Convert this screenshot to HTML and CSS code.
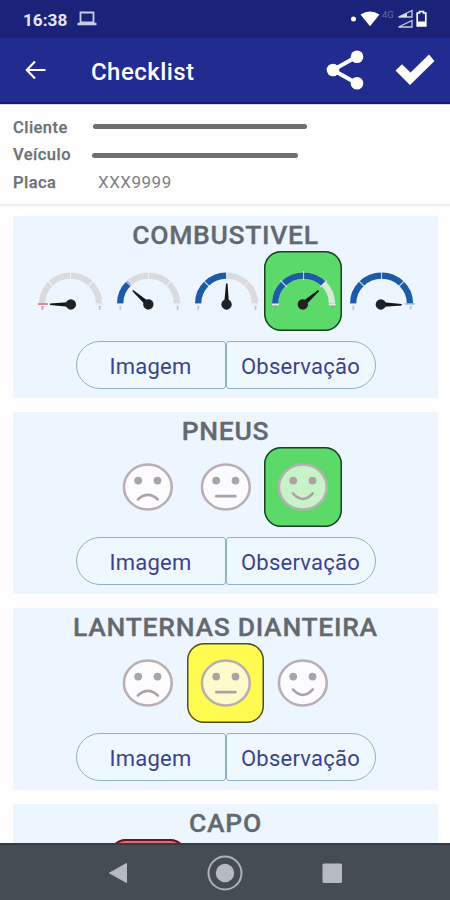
FILE: index.html
```
<!DOCTYPE html>
<html lang="pt-BR">
<head>
<meta charset="utf-8">
<title>Checklist</title>
<link rel="stylesheet" href="styles.css">
</head>
<body>
<svg class="defs" aria-hidden="true">
  <symbol id="dial" viewBox="0 0 78 80">
    <path d="M11.200 52.500A28.500 28 0 0 1 68.200 52.500" fill="none" stroke="var(--track, #dadbde)" stroke-width="6.300"/>
    <path d="M11.200 52.500A28.500 28 0 0 1 68.200 52.500" fill="none" stroke="#1b5ba8" stroke-width="6.300" pathLength="100" stroke-dasharray="var(--level, 0) 200"/>
    <path d="M39.700 20V29M16.500 29.500L23 36M63 29.500L56.500 36" stroke="#eef5fd" stroke-opacity=".75" stroke-width="1.200"/>
    <path d="M8 53.500H15M65 53.500H72" stroke="#e9edf2" stroke-width="1.500"/>
    <path d="M10.500 56H12.500M10.500 58H12M68 56H70M68 58H69.500" stroke="#8f99a6" stroke-width="1"/>
  </symbol>
  <symbol id="needle" viewBox="0 0 78 80">
    <path d="M18 52L39 50.500V55.500L18 53.500Z" fill="#15171b"/>
    <circle cx="39" cy="53" r="5.200" fill="#202226"/>
  </symbol>
  <symbol id="face" viewBox="0 0 78 80">
    <ellipse cx="39" cy="40" rx="24" ry="22.600" fill="var(--skin, #fcfcfe)" stroke="#b9afb3" stroke-width="2.600"/>
    <circle cx="29.300" cy="33.500" r="3.900" fill="#aba3a5"/>
    <circle cx="48.700" cy="33.500" r="3.900" fill="#aba3a5"/>
  </symbol>
  <symbol id="sad" viewBox="0 0 78 80">
    <use href="#face"/>
    <path d="M29 52.500Q39 43.500 49 52.500" fill="none" stroke="#aba3a5" stroke-width="2.600" stroke-linecap="round"/>
  </symbol>
  <symbol id="neutral" viewBox="0 0 78 80">
    <use href="#face"/>
    <path d="M29.500 49.200H48.500" stroke="#aba3a5" stroke-width="2.700" stroke-linecap="round"/>
  </symbol>
  <symbol id="happy" viewBox="0 0 78 80">
    <use href="#face"/>
    <path d="M29 46.500Q39 57.500 49 46.500" fill="none" stroke="#aba3a5" stroke-width="2.600" stroke-linecap="round"/>
  </symbol>
</svg>

<div class="screen">
  <div class="status">
    <span class="clock">16:38</span>
    <svg class="laptop" width="20" height="16" viewBox="0 0 20 16"><path d="M3.500 1.500H16.500V11.500H3.500Z" fill="none" stroke="#c9cce6" stroke-width="1.800"/><path d="M.5 11.800H19.500V14.300H.5Z" fill="#c9cce6"/></svg>
    <div class="signals">
      <svg width="30" height="18" viewBox="0 0 30 18"><circle cx="3.500" cy="9" r="2.500" fill="#fff"/><path d="M10.500 4.500Q20 -1.500 29.500 4.500L20 16.200Z" fill="#fff"/></svg>
      <span class="network">4G</span>
      <svg width="32" height="20" viewBox="0 0 32 20"><path d="M1.500 8L15 1.500V8ZM1.500 18L15 11.500V18Z" fill="none" stroke="#c9cce2" stroke-width="1.300"/><path d="M2 8L10 4V8Z" fill="#dfe1ef"/><path d="M20.200 4H22.500V2.500H26.500V4H28.800V17H20.200Z" fill="none" stroke="#fff" stroke-width="1.700"/><path d="M20 12.500H29V17H20Z" fill="#fff"/></svg>
    </div>
  </div>

  <header class="toolbar">
    <svg class="back" width="22" height="20" viewBox="0 0 22 20"><path d="M20.500 10H2M10 1.500L1.800 10L10 18.500" fill="none" stroke="#fff" stroke-width="2.200"/></svg>
    <h1>Checklist</h1>
    <svg class="share" width="38" height="40" viewBox="0 0 38 40"><path d="M31 6.500L7 20L31 33.500" fill="none" stroke="#fff" stroke-width="4"/><circle cx="31" cy="6.700" r="6.300" fill="#fff"/><circle cx="7" cy="20" r="6.300" fill="#fff"/><circle cx="31" cy="33.300" r="6.300" fill="#fff"/></svg>
    <svg class="confirm" width="40" height="32" viewBox="0 0 40 32"><path d="M.5 16.500L7 10.300L15.500 18.500L34 .5L39.500 7L15 31Z" fill="#fff"/></svg>
  </header>

  <section class="details">
    <div class="row"><b>Cliente</b><i class="line client"></i></div>
    <div class="row"><b>Veículo</b><i class="line vehicle"></i></div>
    <div class="row"><b>Placa</b><span class="plate">XXX9999</span></div>
  </section>

  <main class="list">
    <section class="card">
      <h2>COMBUSTIVEL</h2>
      <div class="options">
        <svg class="option" viewBox="0 0 78 80"><use href="#dial"/><path d="M7 53H17" stroke="#e1667e" stroke-width="1.500"/><path d="M10.500 56H13M10.500 58H12.500" stroke="#e1899b"/><use href="#needle" x="1" y=".5"/></svg>
        <svg class="option quarter" viewBox="0 0 78 80"><use href="#dial"/><use href="#needle" transform="translate(.5 .5) rotate(41 39 53)"/></svg>
        <svg class="option half" viewBox="0 0 78 80"><use href="#dial"/><use href="#needle" transform="translate(.7 .5) rotate(90 39 53)"/></svg>
        <svg class="option three-quarters good" viewBox="0 0 78 80"><use href="#dial"/><use href="#needle" transform="translate(0 .5) rotate(138 39 53)"/></svg>
        <svg class="option full" viewBox="0 0 78 80"><use href="#dial"/><path d="M63 53H73" stroke="#72b6df" stroke-width="1.300"/><use href="#needle" transform="translate(0 .5) rotate(180 39 53)"/></svg>
      </div>
      <div class="actions"><button>Imagem</button><button>Observação</button></div>
    </section>

    <section class="card">
      <h2>PNEUS</h2>
      <div class="options">
        <svg class="option" viewBox="0 0 78 80"><use href="#sad"/></svg>
        <svg class="option" viewBox="0 0 78 80"><use href="#neutral"/></svg>
        <svg class="option good" viewBox="0 0 78 80"><use href="#happy"/></svg>
      </div>
      <div class="actions"><button>Imagem</button><button>Observação</button></div>
    </section>

    <section class="card">
      <h2>LANTERNAS DIANTEIRA</h2>
      <div class="options">
        <svg class="option" viewBox="0 0 78 80"><use href="#sad"/></svg>
        <svg class="option fair" viewBox="0 0 78 80"><use href="#neutral"/></svg>
        <svg class="option" viewBox="0 0 78 80"><use href="#happy"/></svg>
      </div>
      <div class="actions"><button>Imagem</button><button>Observação</button></div>
    </section>

    <section class="card">
      <h2>CAPO</h2>
      <div class="options">
        <svg class="option bad" viewBox="0 0 78 80"><use href="#sad"/></svg>
        <svg class="option" viewBox="0 0 78 80"><use href="#neutral"/></svg>
        <svg class="option" viewBox="0 0 78 80"><use href="#happy"/></svg>
      </div>
    </section>
  </main>

  <nav class="navbar">
    <svg width="36" height="36" viewBox="0 0 36 36"><path d="M9.500 18L26.500 8.500V27.500Z" fill="#b5bbc1" stroke="#b5bbc1" stroke-linejoin="round"/></svg>
    <svg width="36" height="36" viewBox="0 0 36 36"><circle cx="18" cy="18" r="16.500" fill="none" stroke="#adb3ba" stroke-width="2"/><circle cx="18" cy="18" r="9.200" fill="#b5bbc1"/></svg>
    <svg width="36" height="36" viewBox="0 0 36 36"><rect x="8.500" y="8.500" width="19.500" height="19.500" rx="1.500" fill="#b5bbc1"/></svg>
  </nav>
</div>
</body>
</html>
```
FILE: styles.css
```
* { box-sizing: border-box; }
body { margin: 0; font-family: Roboto, sans-serif; background: #fefefe; }
.defs { display: block; width: 0; height: 0; }
.screen { width: 450px; height: 900px; display: flex; flex-direction: column; overflow: hidden; }
.status { flex: none; height: 38px; padding: 0 21px 0 23px; display: flex; align-items: center; background: #1b227a; }
.clock { width: 54px; font-size: 17.200px; font-weight: 700; color: #e4e6f5; letter-spacing: 0; padding-top: 1px; }
.signals { margin-left: auto; display: flex; align-items: center; }
.network { width: 16px; margin-right: 1px; font-size: 9.500px; line-height: 10px; padding-left: 2px; margin-top: -8px; color: #6268a6; }
.toolbar { flex: none; height: 66px; padding: 0 15px 0 25px; display: flex; align-items: center; background: #222b8f; border-bottom: 2px solid #131b7c; }
.toolbar h1 { margin: 4px auto 0 44px; font-size: 24px; font-weight: 500; letter-spacing: .45px; color: #fff; }
.share { margin-right: 31px; }
.details { flex: none; height: 102px; padding: 9px 13px; background: #fefefe; border-bottom: 2px solid #eeeeef; border-top: 1px solid #d9dbec; }
.row { height: 27.300px; display: flex; align-items: center; color: #707173; }
.row b { width: 79px; font-size: 16.500px; font-weight: 500; letter-spacing: .45px; -webkit-text-stroke: .25px #707173; }
.line { height: 5px; border-radius: 3px; background: #707071; }
.client { width: 214px; margin: -2px 0 0 1px; }
.vehicle { width: 206px; margin-top: 1px; }
.plate { margin-left: 6px; font-size: 17px; font-weight: 400; letter-spacing: .5px; color: #818184; }
.list { flex: 1; min-height: 0; padding: 10px 12px 0 13px; display: flex; flex-direction: column; gap: 14px; overflow: hidden; }
.card { flex: none; height: 182px; background: #edf5fe; }
.card h2 { margin: 0; height: 35px; line-height: 38px; text-align: center; font-size: 26.500px; font-weight: 500; letter-spacing: .7px; color: #64696f; -webkit-text-stroke: .3px #64696f; }
.options { display: flex; justify-content: center; height: 80px; margin-bottom: 10px; }
.option { flex: none; width: 77.700px; height: 80px; border-radius: 17px; }
.good { background: #5cda69; box-shadow: inset 0 0 0 1.500px #1c3d26; --skin: #c8f2c8; --track: #d7ead9; }
.fair { background: #fffb51; box-shadow: inset 0 0 0 1.500px #4e4d28; --skin: #fefbcb; }
.bad { background: #e56b70; box-shadow: inset 0 0 0 2px #581b29; --skin: #f7d0d2; }
.quarter { --level: 26; }
.half { --level: 50; }
.three-quarters { --level: 75; }
.full { --level: 100; }
.actions { width: 300px; margin: 0 auto; display: flex; }
.actions button { width: 150px; height: 48px; padding: 2px 0 0; border: 1.500px solid #8fb2cb; background: #eff8fe; font: 400 22px Roboto, sans-serif; letter-spacing: .25px; color: #3a438f; }
.actions button:first-child { border-radius: 24px 3px 3px 24px; }
.actions button:last-child { border-radius: 3px 24px 24px 3px; }
.navbar { flex: none; height: 57px; padding: 0 100px; display: flex; align-items: center; justify-content: space-between; background: #464c54; border-top: 2px solid #363c44; }
```
